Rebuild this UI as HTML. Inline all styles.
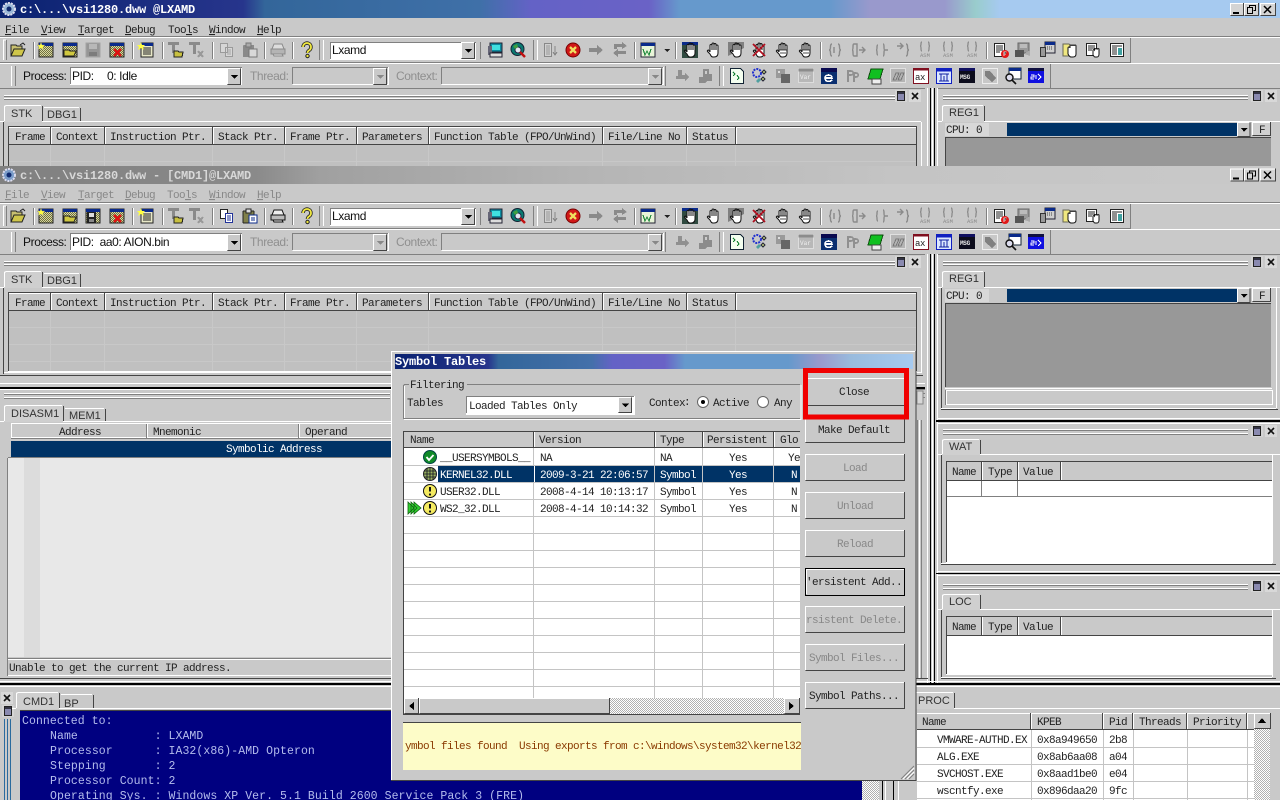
<!DOCTYPE html>
<html><head><meta charset="utf-8"><title>Symbol Tables</title>
<style>
html,body{margin:0;padding:0;background:#c9c9c9;overflow:hidden}
svg{display:block}
.m{font:11px "Liberation Mono",monospace;letter-spacing:-.6px;fill:#222}
.g{fill:#8f8f8f}
.mg{font:11px "Liberation Mono",monospace;letter-spacing:-.6px;fill:#888}
.w{fill:#fff}
.t{font:bold 12px "Liberation Mono",monospace;letter-spacing:-.2px;fill:#fff}
.s{font:11px "Liberation Sans",sans-serif;fill:#333}
.p{font:12px "Liberation Sans",sans-serif;letter-spacing:-.4px;fill:#111}
.pd{font:12px "Liberation Sans",sans-serif;letter-spacing:-.4px;fill:#8f8f8f}
.c{font:11.5px "Liberation Mono",monospace;letter-spacing:.07px;fill:#b4bcec}
.hi{stroke:#fff;fill:none}.lo{stroke:#444;fill:none}.bl{stroke:#000;fill:none}
.md{stroke:#808080;fill:none}.li{stroke:#c4c4c4;fill:none}
.ic{font:bold 6px "Liberation Mono",monospace}
path,rect{shape-rendering:crispEdges}
.i path,.i rect,.i circle{shape-rendering:auto}
</style></head><body>
<svg xmlns="http://www.w3.org/2000/svg" width="1280" height="800" viewBox="0 0 1280 800">
<defs>
<pattern id="ht" width="2" height="2" patternUnits="userSpaceOnUse"><rect width="2" height="2" fill="#fff"/><rect width="1" height="1" fill="#b0b0b0"/><rect x="1" y="1" width="1" height="1" fill="#b0b0b0"/></pattern>
<pattern id="hg" width="2" height="2" patternUnits="userSpaceOnUse"><rect width="2" height="2" fill="#d8d8a0"/><rect width="1" height="1" fill="#707040"/><rect x="1" y="1" width="1" height="1" fill="#707040"/></pattern>
<linearGradient id="tb1" gradientUnits="userSpaceOnUse" x1="0" x2="1280" y1="0" y2="0">
<stop offset="0" stop-color="#0a2270"/><stop offset=".19" stop-color="#27358c"/><stop offset=".207" stop-color="#33669a"/><stop offset=".375" stop-color="#3f70a8"/><stop offset=".415" stop-color="#6462c6"/><stop offset=".507" stop-color="#6a62c6"/><stop offset=".531" stop-color="#6699cc"/><stop offset=".648" stop-color="#6699cc"/><stop offset=".68" stop-color="#9999cc"/><stop offset=".738" stop-color="#9999cc"/><stop offset=".762" stop-color="#99cccc"/><stop offset=".781" stop-color="#a6caf0"/><stop offset="1" stop-color="#a6caf0"/></linearGradient>
<linearGradient id="tb2" gradientUnits="userSpaceOnUse" x1="0" x2="1280" y1="0" y2="0">
<stop offset="0" stop-color="#808080"/><stop offset=".2" stop-color="#8a8a8a"/><stop offset=".25" stop-color="#a0a0a0"/><stop offset=".45" stop-color="#b4b4b4"/><stop offset=".7" stop-color="#c4c4c4"/><stop offset="1" stop-color="#c9c9c9"/></linearGradient>
<linearGradient id="tb3" gradientUnits="userSpaceOnUse" x1="395" x2="913" y1="0" y2="0">
<stop offset="0" stop-color="#0a2270"/><stop offset=".18" stop-color="#27358c"/><stop offset=".2" stop-color="#33669a"/><stop offset=".38" stop-color="#4470aa"/><stop offset=".42" stop-color="#6462c6"/><stop offset=".52" stop-color="#6a62c6"/><stop offset=".56" stop-color="#6699cc"/><stop offset=".76" stop-color="#6699cc"/><stop offset=".82" stop-color="#9999cc"/><stop offset=".88" stop-color="#99bbdd"/><stop offset="1" stop-color="#a6caf0"/></linearGradient>

<g id="ar"><rect width="14" height="17" fill="#c9c9c9"/><path class="hi" d="M.5 16V.5H13"/><path class="lo" d="M.5 16.5H13.5V.5"/><path d="M4 7h7l-3.500 4z" fill="#000"/></g>
<g id="ard"><rect width="14" height="17" fill="#c9c9c9"/><path class="hi" d="M.5 16V.5H13"/><path class="lo" d="M.5 16.500H13.500V.5"/><path d="M4 7h7l-3.500 4z" fill="#888"/></g>

<g id="fo" class="i"><path d="M1 3h5l1 1h5v3H5L2 13H1z" fill="#c8c070" stroke="#222"/><path d="M4 7h11l-3 7H1z" fill="#cfc64a" stroke="#222"/><path d="M10 3l3-2 2 2" fill="none" stroke="#222"/></g>
<g id="win"><rect x="1" y="1" width="14" height="14" fill="url(#hg)" stroke="#222"/><rect x="1" y="1" width="14" height="3" fill="#0a2a8a"/></g>
<g id="w1" class="i"><use href="#win"/><path d="M3 0l1 3 3 0-2 2 1 3-3-2-3 2 1-3-2-2 3 0z" fill="#ffff40" stroke="#888" stroke-width=".4"/></g>
<g id="w2" class="i"><use href="#win"/><path d="M2 8h5l1 1h6l-2 5H2z" fill="#d0c840" stroke="#222"/></g>
<g id="w3"><rect x="1" y="1" width="14" height="14" fill="#969696" stroke="#a4a4a4"/><rect x="4" y="2" width="8" height="5" fill="#b8b8b8"/><rect x="4" y="10" width="8" height="4" fill="#7c7c7c"/></g>
<g id="sv"><use href="#win"/><rect x="2" y="4" width="9" height="11" fill="#222"/><rect x="4" y="5" width="5" height="4" fill="#ddd"/><rect x="4" y="11" width="5" height="3" fill="#888"/></g>
<g id="w4" class="i"><use href="#win"/><path d="M5 7l7 7M12 7l-7 7" stroke="#e01010" stroke-width="2.400"/></g>
<g id="nt" class="i"><rect x="3" y="1" width="12" height="14" fill="#e8e8c8" stroke="#222"/><rect x="3" y="1" width="12" height="3" fill="#0a2a8a"/><path d="M5 6h8M5 8h8M5 10h8M5 12h8" stroke="#222"/><path d="M3 0l1 3h3l-2 2 1 3-3-2-3 2 1-3-2-2h3z" fill="#ffff40"/></g>
<g id="t1"><rect x="0" y="0" width="11" height="3" fill="#8a8a8a"/><rect x="4" y="0" width="3" height="11" fill="#8a8a8a"/><path d="M6 9h4l1 1h4l-1 5H6z" fill="#c8c040" stroke="#222"/></g>
<g id="t2"><rect x="0" y="0" width="11" height="3" fill="#8a8a8a"/><rect x="4" y="0" width="3" height="12" fill="#8a8a8a"/><path d="M9 9l5 6M14 9l-5 6" stroke="#999" stroke-width="2"/></g>
<g id="cp"><path d="M1.500 1.500h7v9h-7zM6.500 5.500h7v9h-7z" fill="#d6d6d6" stroke="#9a9a9a"/><path d="M8 8h4M8 10h4M8 12h4" stroke="#a4a4a4"/></g>
<g id="cpn"><path d="M1.500 1.500h7v9h-7z" fill="#fff" stroke="#222"/><path d="M6.500 5.500h7v9h-7z" fill="#fff" stroke="#223399"/><path d="M8 8h4M8 10h4M8 12h4" stroke="#223399"/></g>
<g id="pa"><rect x="1" y="3" width="11" height="12" rx="1" fill="#8a8a8a"/><rect x="4" y="1" width="5" height="4" fill="#aaa" stroke="#777"/><rect x="7" y="7" width="8" height="8" fill="#d8d8d8" stroke="#777"/></g>
<g id="pan"><rect x="1" y="3" width="11" height="12" rx="1" fill="#80804a" stroke="#222"/><rect x="4" y="1" width="5" height="4" fill="#ddd" stroke="#222"/><rect x="7" y="7" width="8" height="8" fill="#fff" stroke="#0a2a8a"/><path d="M9 10h4M9 12h4" stroke="#0a2a8a"/></g>
<g id="pr" class="i"><path d="M4 2h8l2 5H2z" fill="#ddd" stroke="#8a8a8a"/><path d="M1 7h14v5H1z" fill="#b4b4b4" stroke="#8a8a8a"/><path d="M3 12h9l1 2H4z" fill="#ddd" stroke="#8a8a8a"/></g>
<g id="prn" class="i"><path d="M4 2h8l2 5H2z" fill="#eee" stroke="#111"/><path d="M1 7h14v5H1z" fill="#bbb" stroke="#111"/><path d="M3 12h9l1 2H4z" fill="#eee" stroke="#111"/></g>
<g id="qm" class="i"><path d="M4 5a4 4 0 1 1 6 3.500c-1 .6-1.500 1-1.500 2.500" fill="none" stroke="#222" stroke-width="3.400"/><path d="M4 5a4 4 0 1 1 6 3.500c-1 .6-1.500 1-1.500 2.500" fill="none" stroke="#f0e840" stroke-width="1.800"/><circle cx="8.500" cy="14" r="1.700" fill="#f0e840" stroke="#222"/></g>
<g id="pc"><rect x="3" y="1" width="12" height="9" fill="#0c8ca0" stroke="#223"/><rect x="5" y="3" width="8" height="5" fill="#40e0e0"/><rect x="1" y="4" width="4" height="9" fill="#667"/><rect x="3" y="11" width="12" height="4" fill="#ddd" stroke="#223"/></g>
<g id="gl" class="i"><circle cx="7.500" cy="7" r="6.500" fill="#0a7a70" stroke="#123"/><circle cx="8" cy="8" r="3" fill="#e0e8f0" stroke="#224"/><path d="M10 10l5 5" stroke="#c01010" stroke-width="2.500"/><path d="M3 4l4-2 1 3-3 2z" fill="#40a040"/></g>
<g id="li"><path d="M2.500 1.500h7v13h-7z" fill="#d0d0d0" stroke="#888"/><path d="M4 4h4M4 6h4M4 8h4M4 10h4M4 12h4" stroke="#999"/><path d="M13 4v8M11 10l2 3 2-3" stroke="#888" fill="none"/></g>
<g id="rx" class="i"><circle cx="8" cy="8" r="7" fill="#d01818" stroke="#700"/><path d="M5 5l6 6M11 5l-6 6" stroke="#f0e060" stroke-width="2.300"/></g>
<g id="ra"><path d="M1 6h8V3l6 5-6 5v-3H1z" fill="#8a8a8a"/></g>
<g id="ra2"><path d="M2 2h8V0l5 4-5 3V5H5v2H2zM14 9H6v-2L1 11l5 4v-3h8z" fill="#8a8a8a"/></g>
<g id="wy"><rect x="1" y="1" width="14" height="14" fill="#e8f4d8" stroke="#223"/><rect x="1" y="1" width="14" height="3" fill="#0a2a8a"/><path d="M3 7l2 6 2-4 2 4 2-6" fill="none" stroke="#108030"/></g>
<g id="dn"><path d="M2 7h6l-3 3z" fill="#222"/></g>
<g id="hp" class="i"><path d="M5 3h8v9l-3 3H7L2 9l3 1z" fill="#fff"/><path d="M5 10V3.500a1 1 0 0 1 2 0V8M7 8V2a1 1 0 0 1 2 0V8M9 8V2.500a1 1 0 0 1 2 0V8M11 8V4a1 1 0 0 1 2 0v7c0 2.500-1.500 4-4 4H8c-1.500 0-2-1-3-3L2.500 9.500c-.7-1 .8-2 1.500-1L5 10" fill="none" stroke="#111"/></g>
<g id="h1"><rect x="0" y="0" width="16" height="16" fill="#2f4a40"/><rect x="0" y="0" width="16" height="3" fill="#0a2a8a"/><use href="#hp"/></g>
<g id="h2" class="i"><use href="#hp"/></g>
<g id="h3" class="i"><path d="M0 0h16v6L0 14z" fill="#808080"/><use href="#hp"/></g>
<g id="h4" class="i"><use href="#hp"/><path d="M2 2l12 12M14 2L2 14" stroke="#b01020" stroke-width="1.800"/></g>
<g id="h5" class="i"><use href="#hp"/><path d="M5 8h8M6 11h6" stroke="#111" stroke-width=".8"/></g>
<g id="b1" class="i"><path d="M5 2C2 2 5 8 2 8c3 0 0 6 3 6M11 2c3 0 0 6 3 6-3 0 0 6-3 6" fill="none" stroke="#8a8a8a" stroke-width="1.400"/><path d="M7 5v6" stroke="#8a8a8a" stroke-width="1.400"/></g>
<g id="b2" class="i"><path d="M4 2C2 2 4 8 2 8c2 0 0 6 2 6h3V2zM9 8h6M12 5l3 3-3 3" fill="none" stroke="#8a8a8a" stroke-width="1.400"/></g>
<g id="b3" class="i"><path d="M5 3C3 3 5 8 3 8c2 0 0 5 2 5M10 2c2 0 0 6 2 6-2 0 0 6-2 6M12 8h3" fill="none" stroke="#8a8a8a" stroke-width="1.400"/></g>
<g id="b4" class="i"><path d="M1 4h6M4 1l3 3-3 3M10 2c3 0 0 6 3 6-3 0 0 6-3 6" fill="none" stroke="#8a8a8a" stroke-width="1.400"/></g>
<g id="b5" class="i"><path d="M5 0C3 0 5 4 3 4c2 0 0 5 2 5M11 0c2 0 0 4 2 4-2 0 0 5-2 5" fill="none" stroke="#8a8a8a" stroke-width="1.300"/><text class="ic" x="3" y="15" style="font-size:5.500px;font-weight:normal;fill:#8a8a8a">ASM</text></g>
<g id="ff" class="i"><path d="M1.500 1.500h10v13h-10z" fill="#fff" stroke="#222"/><path d="M3 4h7M3 6h7M3 8h7M3 10h4" stroke="#222"/><circle cx="12" cy="12" r="4" fill="#e01818"/><path d="M11 14v-4h2.500M11 12h2" stroke="#fff" stroke-width=".8"/></g>
<g id="fe"><path d="M3 1h11v10H3z" fill="#999" stroke="#666"/><path d="M5 3h7M5 5h7" stroke="#ddd"/><path d="M0 8h9v7H0z" fill="#555"/><path d="M9 12l6-4v6z" fill="#aaa"/></g>
<g id="fm"><rect x="6" y="0" width="10" height="11" fill="#cfcfcf" stroke="#223"/><rect x="6" y="0" width="10" height="3" fill="#0a2a8a"/><path d="M1.500 5.500h5v9h-5z" fill="#999" stroke="#333"/><path d="M8 5h6M8 7h6" stroke="#444" stroke-dasharray="1 1"/></g>
<g id="fh" class="i"><path d="M1 2h6l2 2h4v10H1z" fill="#f0e880" stroke="#665"/><path d="M6 9V6a1 1 0 0 1 2 0V4a1 1 0 0 1 2 0 1 1 0 0 1 2 0 1 1 0 0 1 2 0v8c0 2-1 3-3 3H9c-1 0-2-1-3-3z" fill="#fff" stroke="#111"/></g>
<g id="fd" class="i"><path d="M1.500 1.500h10v12h-10z" fill="#fff" stroke="#222"/><path d="M3 4h7M3 6h7M3 8h4" stroke="#222"/><path d="M8 10V8a1 1 0 0 1 1.500 0V7a1 1 0 0 1 1.500 0 1 1 0 0 1 1.500 0 1 1 0 0 1 1.500 0v5c0 2-1 3-2 3h-2c-1 0-1-1-2-2z" fill="#fff" stroke="#111"/></g>
<g id="fl"><path d="M1.500 1.500h13v13h-13z" fill="#fff" stroke="#222"/><path d="M3 4h10M3 6h5M3 8h5M3 10h5M3 12h5" stroke="#222"/><path d="M9 6h4v7H9z" fill="#40a0a0"/></g>
<g id="a1"><path d="M4 2h4v5h3v-2l4 4-4 4v-2H2V8h2z" fill="#909090"/></g>
<g id="a2"><path d="M5 1h6v5h3v7H9l-2 2H1V9h4z" fill="#8c8c8c"/><path d="M7 3h2v3H7z" fill="#ccc"/></g>
<g id="sr"><path d="M1.500 .5h10l3 3v12h-13z" fill="#f4fff0" stroke="#123"/><path d="M4 4l2 2-2 2M8 7l2 3-2 2" fill="none" stroke="#108030"/></g>
<g id="gr" class="i"><circle cx="5" cy="5" r="4" fill="none" stroke="#2030d0" stroke-width="2" stroke-dasharray="2 1"/><path d="M12 2l2 2-2 2-2-2zM11 9l2 2-2 2-2-2z" fill="#c0d080" stroke="#223"/><path d="M4 13l3-3 2 2-3 3z" fill="#50a0a0"/></g>
<g id="st"><path d="M1 1h9v9H1z" fill="#9a9a9a"/><path d="M6 6h9v9H6z" fill="#666"/><path d="M3 3h2v2H3z" fill="#ddd"/></g>
<g id="vr"><rect x=".5" y=".5" width="15" height="14" fill="#b8b8b8" stroke="#ddd"/><rect x=".5" y=".5" width="15" height="3" fill="#8c8c8c"/><text class="ic" x="2" y="11" style="font-weight:normal;fill:#f0f0f0">Var</text></g>
<g id="eb"><rect x="0" y="0" width="16" height="16" fill="#0a2f70"/><rect x="0" y="0" width="16" height="4" fill="#0a0a50"/><path d="M4 10h7c0-4-7-4-7 0s5 4 7 2" fill="none" stroke="#fff" stroke-width="1.600"/></g>
<g id="pp"><path d="M3 14V3h3c3 0 3 4 0 4H3M9 14V5h2c3 0 3 4 0 4H9" fill="none" stroke="#909090" stroke-width="1.600"/></g>
<g id="gb"><path d="M4 1h12l-3 10H1z" fill="#10c020" stroke="#105010"/><path d="M5 11h9v5H5z" fill="#eee" stroke="#444"/></g>
<g id="sq"><rect x=".5" y=".5" width="15" height="14" fill="#b4b4b4" stroke="#e0e0e0"/><path d="M3 12l3-7 3 0-3 7zM8 12l3-7 3 0-3 7z" fill="none" stroke="#777"/></g>
<g id="ax"><rect x=".5" y=".5" width="15" height="15" fill="#fff" stroke="#801020"/><rect x=".5" y=".5" width="15" height="2" fill="#801020"/><text class="ic" x="2" y="12" style="font-size:9px;font-weight:normal;fill:#222;letter-spacing:-.4px">ax</text></g>
<g id="mm"><rect x=".5" y=".5" width="15" height="15" fill="#dce8ff" stroke="#1020c0"/><rect x=".5" y=".5" width="15" height="3" fill="#1020c0"/><path d="M3 6h10M3 13h10M5 6v7M11 6v7M8 8v5" stroke="#1020a0" stroke-width="1.400"/></g>
<g id="ms"><rect width="16" height="15" fill="#0c0c1c"/><rect width="16" height="3" fill="#101060"/><text class="ic" x="1" y="11" style="fill:#e4e4e4;letter-spacing:-.3px">MSG</text></g>
<g id="tg"><rect x=".5" y=".5" width="15" height="15" fill="#c8c8c8" stroke="#eee"/><path d="M3 3h5l6 7-4 4-7-6z" fill="#808080"/></g>
<g id="dg" class="i"><rect x="4" y="0" width="12" height="11" fill="#fff" stroke="#123"/><rect x="4" y="0" width="12" height="3" fill="#0a2a8a"/><circle cx="4.500" cy="9.500" r="3.500" fill="#dde" stroke="#111" stroke-width="1.400"/><path d="M7 12l4 4" stroke="#111" stroke-width="1.600"/></g>
<g id="si"><rect width="16" height="15" fill="#1010e0"/><rect width="16" height="3" fill="#101040"/><path d="M3 7h3v2H3v2h3M8 7v4M10 6l3 3-3 3" fill="none" stroke="#fff"/></g>

<g id="icons1">
<use href="#fo" x="10" y="42"/><use href="#w1" x="38" y="42"/><use href="#w2" x="62" y="42"/><use href="#w3" x="85" y="42"/><use href="#w4" x="109" y="42"/><use href="#nt" x="138" y="42"/><use href="#t1" x="168" y="42"/><use href="#t2" x="189" y="42"/><use href="#cp" x="219" y="42"/><use href="#pa" x="242" y="42"/><use href="#pr" x="270" y="42"/><use href="#qm" x="299" y="42"/>
<use href="#pc" x="487" y="42"/><use href="#gl" x="510" y="42"/><use href="#li" x="542" y="42"/><use href="#rx" x="565" y="42"/><use href="#ra" x="588" y="42"/><use href="#ra2" x="612" y="42"/><use href="#wy" x="640" y="42"/><use href="#dn" x="662" y="42"/>
<use href="#h1" x="682" y="42"/><use href="#h2" x="705" y="42"/><use href="#h3" x="728" y="42"/><use href="#h4" x="751" y="42"/><use href="#h5" x="774" y="42"/><use href="#h5" x="797" y="42"/>
<use href="#b1" x="827" y="42"/><use href="#b2" x="850" y="42"/><use href="#b3" x="873" y="42"/><use href="#b4" x="896" y="42"/><use href="#b5" x="917" y="42"/><use href="#b5" x="940" y="42"/><use href="#b5" x="964" y="42"/>
<use href="#ff" x="993" y="42"/><use href="#fe" x="1015" y="42"/><use href="#fm" x="1039" y="42"/><use href="#fh" x="1062" y="42"/><use href="#fd" x="1085" y="42"/><use href="#fl" x="1109" y="42"/>
<use href="#a1" x="674" y="68"/><use href="#a2" x="698" y="68"/>
<use href="#sr" x="729" y="68"/><use href="#gr" x="752" y="68"/><use href="#st" x="775" y="68"/><use href="#vr" x="798" y="68"/><use href="#eb" x="821" y="68"/><use href="#pp" x="845" y="68"/><use href="#gb" x="867" y="68"/><use href="#sq" x="890" y="68"/><use href="#ax" x="913" y="68"/><use href="#mm" x="936" y="68"/><use href="#ms" x="959" y="68"/><use href="#tg" x="982" y="68"/><use href="#dg" x="1005" y="68"/><use href="#si" x="1028" y="68"/>
</g>
<g id="tbfr">
<path class="hi" d="M0 37.500H1280"/><path class="md" d="M0 36.500H1280"/>
<path class="md" d="M0 62.500H1130.500V38"/><path class="hi" d="M0 63.500H1280"/>
<path class="md" d="M0 88.500H1280"/><path class="md" d="M1050.500 64V88"/>
<path class="md" d="M33.500 42V59M132.500 42V59M162.500 42V59M212.500 42V59M264.500 42V59M292.500 42V59M319.500 40V60M480.500 42V59M533.500 40V60M634.500 42V59M675.500 42V59M820.500 42V59M986.500 42V59"/>
<path class="hi" d="M34.500 42V59M133.500 42V59M163.500 42V59M213.500 42V59M265.500 42V59M293.500 42V59M323.500 40V60M537.500 40V60M635.500 42V59M676.500 42V59M821.500 42V59M987.500 42V59"/>
<path class="hi" d="M3.500 60V40H6"/><path class="md" d="M6.500 40V60"/><path class="hi" d="M11.500 86V66"/><path class="md" d="M15.500 66V86"/>
<path class="md" d="M719.500 66V86M665.500 66V86"/><path class="hi" d="M723.500 66V86"/>
<rect x="330" y="42" width="146" height="18" fill="#fff"/><path class="md" d="M330.500 59V42.500H476"/><use href="#ar" x="461" y="42"/>
<rect x="70" y="67" width="172" height="18" fill="#fff"/><path class="md" d="M70.500 84V67.500H242"/><use href="#ar" x="227" y="68"/>
<path class="md" d="M292.500 84V67.500H388"/><path class="hi" d="M292.500 84.500H388.500V67"/><use href="#ard" x="373" y="68"/>
<path class="md" d="M441.500 84V67.500H663"/><path class="hi" d="M441.500 84.500H663.500V67"/><use href="#ard" x="648" y="68"/>
</g>
<g id="bt"><rect width="12" height="12" fill="#d4d4d4"/><rect x="2.500" y="1.500" width="7" height="9" fill="#8a8ab0" stroke="#222"/><rect x="3" y="2" width="6" height="2" fill="#334"/></g>
<g id="xb"><rect width="12" height="12" fill="#d8d8d8"/><path d="M3 3l6 6M9 3l-6 6" stroke="#111" stroke-width="1.600" style="shape-rendering:auto"/></g>
<g id="wbt"><rect x="1230" y="3" width="13" height="13" fill="#d4d4d4"/><path class="hi" d="M1230.500 15V3.500H1243"/><path class="lo" d="M1230.500 15.500H1243.500V3"/><rect x="1233" y="12" width="6" height="2" fill="#000"/>
<rect x="1244" y="3" width="14" height="13" fill="#d4d4d4"/><path class="hi" d="M1244.500 15V3.500H1258"/><path class="lo" d="M1244.500 15.500H1258.500V3"/><path class="bl" d="M1249.500 7V5.500H1255.500V10.500H1253.500M1247.500 7.500H1252.500V13.500H1247.500Z"/>
<rect x="1260" y="3" width="15" height="13" fill="#d4d4d4"/><path class="hi" d="M1260.500 15V3.500H1275"/><path class="lo" d="M1260.500 15.500H1275.500V3"/><path d="M1264 6l7 7M1271 6l-7 7" stroke="#000" stroke-width="1.500" style="shape-rendering:auto"/></g>
<g id="stkf">
<path class="hi" d="M4 95.500H896M4 98.500H896"/><path class="md" d="M4 96.500H896M4 99.500H896"/>
<use href="#bt" x="895" y="90"/><use href="#xb" x="909" y="90"/>
<path class="hi" d="M943 95.500H1248M943 98.500H1248"/><path class="md" d="M943 96.500H1248M943 99.500H1248"/>
<use href="#bt" x="1251" y="90"/><use href="#xb" x="1265" y="90"/>
<rect x="925" y="88" width="13" height="90" fill="#c9c9c9"/><path class="bl" d="M930.500 88V178M934.500 88V178"/><path class="hi" d="M927.500 88V178M932.500 88V178M937.500 88V178"/>
<rect x="4" y="105" width="38" height="17" fill="#cfcfcf"/><path class="hi" d="M4.500 121V106.500L6 105.500H41"/><path class="lo" d="M42.500 106V121"/>
<path class="hi" d="M44 107.500H79"/><path class="lo" d="M80.500 108V121"/>
<path class="hi" d="M0 121.500H4M42 121.500H921"/>
<path class="lo" d="M8.500 127V200M8 126.500H916.500V200"/>
<rect x="9" y="127" width="907" height="18" fill="#c9c9c9"/><path class="hi" d="M9 127.500H916"/><path class="lo" d="M9 144.500H916"/>
<path class="lo" d="M50.500 127V144M104.500 127V144M212.500 127V144M284.500 127V144M356.500 127V144M428.500 127V144M602.500 127V144M686.500 127V144M735.500 127V144"/>
<path class="hi" d="M51.500 127V144M105.500 127V144M213.500 127V144M285.500 127V144M357.500 127V144M429.500 127V144M603.500 127V144M687.500 127V144M736.500 127V144"/>
<rect x="9" y="145" width="907" height="60" fill="#c0c0c0"/>
<path d="M50.500 145V205M104.500 145V205M212.500 145V205M284.500 145V205M356.500 145V205M428.500 145V205M602.500 145V205M686.500 145V205M735.500 145V205M9 161.500H916M9 178.500H916M9 195.500H916" stroke="#c8c8c8" fill="none"/>
<path class="hi" d="M921.500 122V200"/>
<path class="lo" d="M3.500 122V200"/>
<rect x="942" y="105" width="42" height="17" fill="#cfcfcf"/><path class="hi" d="M942.500 121V106.500L944 105.500H983"/><path class="lo" d="M984.500 106V121"/>
<path class="hi" d="M938 121.500H942M984 121.500H1280"/>
<rect x="945" y="123" width="44" height="13" fill="#d8d8d8"/>
<rect x="1007" y="123" width="230" height="13" fill="#003366"/><use href="#ar" transform="translate(1237 122) scale(.95 .88)"/>
<rect x="1252" y="122" width="18" height="14" fill="#d0d0d0"/><path class="hi" d="M1252.500 135V122.500H1270"/><path class="lo" d="M1252.500 135.500H1270.500V122"/>
<rect x="946" y="137" width="325" height="45" fill="#989898"/><path class="lo" d="M945.500 137V182M945.500 137.500H1271"/>
</g>
</defs>

<rect width="1280" height="800" fill="#c9c9c9"/>

<!-- window 1 -->
<rect width="1280" height="18" fill="url(#tb1)"/>
<g class="i"><circle cx="9" cy="9" r="6" fill="#9ab8d8" stroke="#dde" stroke-width="2" stroke-dasharray="2 1"/><circle cx="9" cy="9" r="2.500" fill="#102a70"/></g>
<text class="t" x="20" y="13">c:\...\vsi1280.dww @LXAMD</text>
<use href="#wbt"/>
<text class="m" x="5" y="33"><tspan text-decoration="underline">F</tspan>ile</text>
<text class="m" x="41" y="33"><tspan text-decoration="underline">V</tspan>iew</text>
<text class="m" x="78" y="33"><tspan text-decoration="underline">T</tspan>arget</text>
<text class="m" x="125" y="33"><tspan text-decoration="underline">D</tspan>ebug</text>
<text class="m" x="168" y="33">Too<tspan text-decoration="underline">l</tspan>s</text>
<text class="m" x="209" y="33"><tspan text-decoration="underline">W</tspan>indow</text>
<text class="m" x="257" y="33"><tspan text-decoration="underline">H</tspan>elp</text>
<use href="#tbfr"/><use href="#icons1"/>
<text class="p" x="332" y="54">Lxamd</text>
<text class="p" x="23" y="80">Process:</text><text class="p" x="72" y="80">PID:</text><text class="p" x="107" y="80">0: Idle</text>
<text class="pd" x="250" y="80">Thread:</text><text class="pd" x="396" y="80">Context:</text>
<use href="#stkf"/>
<text class="s" x="11" y="117">STK</text><text class="s" x="47" y="118">DBG1</text>
<text class="m" x="15" y="140">Frame</text><text class="m" x="56" y="140">Context</text><text class="m" x="110" y="140">Instruction Ptr.</text><text class="m" x="218" y="140">Stack Ptr.</text><text class="m" x="290" y="140">Frame Ptr.</text><text class="m" x="362" y="140">Parameters</text><text class="m" x="434" y="140">Function Table (FPO/UnWind)</text><text class="m" x="608" y="140">File/Line No</text><text class="m" x="692" y="140">Status</text>
<text class="s" x="949" y="116">REG1</text><text class="m" x="946" y="133">CPU: 0</text><text class="m" x="1259" y="133">F</text>

<!-- window 2 -->
<rect y="166" width="1280" height="634" fill="#c9c9c9"/>
<rect y="166" width="1280" height="18" fill="url(#tb2)"/>
<g class="i"><circle cx="9" cy="175" r="6" fill="#7a9cc8" stroke="#dde" stroke-width="2" stroke-dasharray="2 1"/><circle cx="9" cy="175" r="2.500" fill="#102a70"/></g>
<text class="t" x="20" y="179" style="fill:#d8d8d8">c:\...\vsi1280.dww - [CMD1]@LXAMD</text>
<use href="#wbt" y="165.500"/>
<text class="mg" x="5" y="198"><tspan text-decoration="underline">F</tspan>ile</text>
<text class="mg" x="41" y="198"><tspan text-decoration="underline">V</tspan>iew</text>
<text class="mg" x="78" y="198"><tspan text-decoration="underline">T</tspan>arget</text>
<text class="mg" x="125" y="198"><tspan text-decoration="underline">D</tspan>ebug</text>
<text class="mg" x="167" y="198">Too<tspan text-decoration="underline">l</tspan>s</text>
<text class="mg" x="209" y="198"><tspan text-decoration="underline">W</tspan>indow</text>
<text class="mg" x="257" y="198"><tspan text-decoration="underline">H</tspan>elp</text>
<use href="#tbfr" y="166"/><use href="#icons1" y="166"/>
<rect x="85" y="208" width="16" height="16" fill="#c9c9c9"/><use href="#sv" x="85" y="208"/>
<rect x="219" y="207" width="16" height="17" fill="#c9c9c9"/><use href="#cpn" x="219" y="208"/>
<rect x="242" y="207" width="16" height="17" fill="#c9c9c9"/><use href="#pan" x="242" y="208"/>
<rect x="270" y="207" width="16" height="17" fill="#c9c9c9"/><use href="#prn" x="270" y="208"/>
<text class="p" x="332" y="220">Lxamd</text>
<text class="p" x="23" y="246">Process:</text><text class="p" x="72" y="246">PID:&#160;&#160;aa0: AION.bin</text>
<text class="pd" x="250" y="246">Thread:</text><text class="pd" x="396" y="246">Context:</text>
<use href="#stkf" y="166"/>
<text class="s" x="11" y="283">STK</text><text class="s" x="47" y="284">DBG1</text>
<text class="m" x="15" y="306">Frame</text><text class="m" x="56" y="306">Context</text><text class="m" x="110" y="306">Instruction Ptr.</text><text class="m" x="218" y="306">Stack Ptr.</text><text class="m" x="290" y="306">Frame Ptr.</text><text class="m" x="362" y="306">Parameters</text><text class="m" x="434" y="306">Function Table (FPO/UnWind)</text><text class="m" x="608" y="306">File/Line No</text><text class="m" x="692" y="306">Status</text>
<text class="s" x="949" y="282">REG1</text><text class="m" x="946" y="299">CPU: 0</text><text class="m" x="1259" y="299">F</text>
<!-- STK lower -->
<rect x="9" y="345" width="907" height="26" fill="#c0c0c0"/>
<path d="M50.500 311V371M104.500 311V371M212.500 311V371M284.500 311V371M356.500 311V371M428.500 311V371M602.500 311V371M686.500 311V371M735.500 311V371M9 327.500H916M9 344.500H916M9 361.500H916" stroke="#c8c8c8" fill="none"/>
<path class="hi" d="M8 371.500H917"/><path class="lo" d="M8.500 311V371M916.500 311V371"/>
<path class="hi" d="M3 372.500H921M921.500 288V373"/><path class="lo" d="M3.500 288V374M0 375.500H923"/>
<rect x="0" y="376" width="925" height="14" fill="#c9c9c9"/>
<path class="hi" d="M0 383.500H925M0 389.500H925"/><path class="bl" d="M0 387.500H925M0 388.500H925"/>
<!-- right column reg lower -->
<rect x="925" y="340" width="13" height="345" fill="#c9c9c9"/><path class="bl" d="M930.500 300V685M934.500 300V685"/><path class="hi" d="M927.500 300V685M932.500 300V685M937.500 300V685"/>
<rect x="946" y="303" width="325" height="84" fill="#989898"/><path class="lo" d="M945.500 303V387M945.500 303.500H1271"/>
<path class="hi" d="M945 388.500H1272M946.500 404V390.500H1272M1272.500 390V405M946 404.500H1272"/>
<path class="md" d="M945.500 390V405"/>
<path class="hi" d="M941 408.500H1276M1276.500 288V408"/><path class="lo" d="M941.500 288V408M941 409.500H1278"/>
<!-- sash -->
<path class="bl" d="M936 420.500H1280M936 421.500H1280"/><path class="hi" d="M938 418.500H1280M938 423.500H1280"/>
<!-- DISASM panel -->
<path class="hi" d="M4 393.500H390M4 397.500H390"/><path class="md" d="M4 394.500H390M4 398.500H390"/>
<rect x="4" y="405" width="59" height="17" fill="#cfcfcf"/><path class="hi" d="M4.500 421V406.500L6 405.500H62"/><path class="lo" d="M63.500 406V421"/>
<path class="hi" d="M65 408.500H104"/><path class="lo" d="M105.500 409V421"/>
<path class="hi" d="M0 421.500H4M63 421.500H392"/>
<text class="s" x="11" y="417">DISASM1</text><text class="s" x="69" y="419">MEM1</text>
<path class="hi" d="M11 423.500H391M11 437.500H391M11.500 424V438M147.500 424V438M299.500 424V438"/><path class="md" d="M11 438.500H391M146.500 424V438M298.500 424V438"/>
<text class="m" x="59" y="435">Address</text><text class="m" x="153" y="435">Mnemonic</text><text class="m" x="305" y="435">Operand</text>
<rect x="11" y="441" width="380" height="16" fill="#003366"/>
<text class="m w" x="226" y="452">Symbolic Address</text>
<rect x="8" y="458" width="383" height="199" fill="#e8e8e8"/><rect x="24" y="458" width="16" height="199" fill="#dcdcdc"/>
<path class="md" d="M7.500 458V676M8 457.500H391M8 658.500H391"/><path class="hi" d="M8 659.500H391M8 675.500H391"/>
<text class="m" x="9" y="671">Unable to get the current IP address.</text>
<path class="lo" d="M0 678.500H391"/><path class="hi" d="M0 681.500H391M0 686.500H391"/><path class="bl" d="M0 683.500H391M0 684.500H391"/>
<!-- right of dialog strip -->
<path class="md" d="M917.500 420V678M921.500 420V678"/><path class="hi" d="M919.500 420V678"/><path class="lo" d="M916 678.500H928"/>
<path class="bl" d="M916 683.500H1280M916 684.500H1280"/><path class="hi" d="M916 681.500H1280M916 686.500H1280"/>
<path class="md" d="M916 389.500H925M916 393.500H925M916 397.500H925"/>
<rect x="917" y="391" width="6" height="13" fill="#d8d8d8" stroke="#888"/>
<!-- WAT -->
<path class="hi" d="M943 429.500H1248M943 433.500H1248"/><path class="md" d="M943 430.500H1248M943 434.500H1248"/>
<use href="#bt" x="1251" y="425"/><use href="#xb" x="1265" y="425"/>
<rect x="942" y="439" width="38" height="16" fill="#cfcfcf"/><path class="hi" d="M942.500 454V440.500L944 439.500H979"/><path class="lo" d="M980.500 440V454"/><path class="hi" d="M938 454.500H942M980 454.500H1280"/>
<text class="s" x="949" y="450">WAT</text>
<rect x="946" y="462" width="326" height="100" fill="#fff"/>
<rect x="947" y="462" width="325" height="18" fill="#c9c9c9"/>
<path class="lo" d="M946.500 461V562M946 461.500H1272M947 480.500H1272M981.500 462V480M1017.500 462V480M1060.500 462V480M941.500 455V563M941 564.500H1276"/>
<path class="hi" d="M982.500 462V480M1018.500 462V480M1061.500 462V480M1272.500 455V563M946 562.500H1272M941 563.500H1272"/>
<path class="md" d="M981.500 481V496M1017.500 481V496M947 496.500H1272"/>
<text class="m" x="952" y="475">Name</text><text class="m" x="988" y="475">Type</text><text class="m" x="1023" y="475">Value</text>
<path class="bl" d="M936 573.500H1280"/><path class="hi" d="M938 571.500H1280M938 575.500H1280"/>
<!-- LOC -->
<path class="hi" d="M943 584.500H1248M943 588.500H1248"/><path class="md" d="M943 585.500H1248M943 589.500H1248"/>
<use href="#bt" x="1251" y="580"/><use href="#xb" x="1265" y="580"/>
<rect x="942" y="594" width="38" height="16" fill="#cfcfcf"/><path class="hi" d="M942.500 609V595.500L944 594.500H979"/><path class="lo" d="M980.500 595V609"/><path class="hi" d="M938 609.500H942M980 609.500H1280"/>
<text class="s" x="949" y="605">LOC</text>
<rect x="946" y="617" width="326" height="57" fill="#fff"/>
<rect x="947" y="617" width="325" height="18" fill="#c9c9c9"/>
<path class="lo" d="M946.500 616V674M946 616.500H1272M947 635.500H1272M981.500 617V635M1017.500 617V635M1060.500 617V635M941.500 610V678M941 678.500H1276"/>
<path class="hi" d="M982.500 617V635M1018.500 617V635M1061.500 617V635M1272.500 610V677M946 674.500H1272M941 677.500H1272"/>
<text class="m" x="952" y="630">Name</text><text class="m" x="988" y="630">Type</text><text class="m" x="1023" y="630">Value</text>
<!-- CMD panel -->
<use href="#xb" x="1" y="692"/><use href="#bt" x="2" y="705"/>
<path d="M4.500 719V800M7.500 719V800M10.500 719V800" stroke="#2a6a9e" fill="none"/>
<rect x="16" y="692" width="43" height="17" fill="#cfcfcf"/><path class="hi" d="M16.500 708V693.500L18 692.500H58"/><path class="lo" d="M59.500 693V708"/><path class="hi" d="M61 694.500H92"/><path class="lo" d="M93.500 695V708"/>
<path class="hi" d="M12 708.500H16M59 708.500H391"/>
<text class="s" x="23" y="705">CMD1</text><text class="s" x="64" y="707">BP</text>
<rect x="20" y="711" width="842" height="89" fill="#000080"/>
<path class="lo" d="M20 710.500H391"/>
<text class="c" x="22" y="724" xml:space="preserve">Connected to:</text>
<text class="c" x="50" y="739" xml:space="preserve">Name           : LXAMD</text>
<text class="c" x="50" y="754" xml:space="preserve">Processor      : IA32(x86)-AMD Opteron</text>
<text class="c" x="50" y="769" xml:space="preserve">Stepping       : 2</text>
<text class="c" x="50" y="784" xml:space="preserve">Processor Count: 2</text>
<text class="c" x="50" y="799" xml:space="preserve">Operating Sys. : Windows XP Ver. 5.1 Build 2600 Service Pack 3 (FRE)</text>
<rect x="862" y="781" width="17" height="19" fill="url(#ht)"/>
<path class="bl" d="M882.500 781V800M893.500 781V800"/><path class="hi" d="M885.500 781V800M898.500 781V800"/>
<!-- PROC -->
<rect x="916" y="692" width="38" height="17" fill="#cfcfcf"/><path class="hi" d="M916 692.500H953"/><path class="lo" d="M954.500 693V708"/><path class="hi" d="M954 708.500H1280"/>
<text class="s" x="918" y="704">PROC</text>
<rect x="917" y="730" width="337" height="70" fill="#fff"/>
<rect x="917" y="713" width="353" height="17" fill="#c9c9c9"/>
<path class="hi" d="M917 713.500H1270"/><path class="lo" d="M917 729.500H1254M1030.500 713V729M1102.500 713V729M1132.500 713V729M1186.500 713V729M1246.500 713V729"/>
<path class="hi" d="M1031.500 713V729M1103.500 713V729M1133.500 713V729M1187.500 713V729M1247.500 713V729"/>
<path class="li" d="M1031.500 730V800M1103.500 730V800M1133.500 730V800M1187.500 730V800M1247.500 730V800M917 747.500H1254M917 764.500H1254M917 781.500H1254M917 798.500H1254"/>
<text class="m" x="922" y="725">Name</text><text class="m" x="1037" y="725">KPEB</text><text class="m" x="1109" y="725">Pid</text><text class="m" x="1139" y="725">Threads</text><text class="m" x="1193" y="725">Priority</text>
<text class="m" x="937" y="743">VMWARE-AUTHD.EX</text><text class="m" x="1037" y="743">0x8a949650</text><text class="m" x="1109" y="743">2b8</text>
<text class="m" x="937" y="760">ALG.EXE</text><text class="m" x="1037" y="760">0x8ab6aa08</text><text class="m" x="1109" y="760">a04</text>
<text class="m" x="937" y="777">SVCHOST.EXE</text><text class="m" x="1037" y="777">0x8aad1be0</text><text class="m" x="1109" y="777">e04</text>
<text class="m" x="937" y="794">wscntfy.exe</text><text class="m" x="1037" y="794">0x896daa20</text><text class="m" x="1109" y="794">9fc</text>
<rect x="1254" y="729" width="16" height="71" fill="url(#ht)"/>
<rect x="1254" y="713" width="16" height="16" fill="#c9c9c9"/><path class="hi" d="M1254.500 728V713.500H1270"/><path class="lo" d="M1254.500 728.500H1270.500V713"/><path d="M1258 723h8l-4-5z" fill="#000"/>

<!-- DIALOG -->
<rect x="391" y="351" width="525" height="430" fill="#c9c9c9"/>
<path class="hi" d="M391.500 780V351.500H915"/><path class="lo" d="M391 780.500H916V351"/>
<rect x="395" y="354" width="518" height="15" fill="url(#tb3)"/>
<text class="t" x="395" y="365">Symbol Tables</text>
<path class="md" d="M409 384.500H404.500L403.500 385.500V418.500H800"/><path class="md" d="M467 384.500H800"/>
<path class="hi" d="M404.500 386V418M404 419.500H801V385"/>
<text class="m" x="410" y="388">Filtering</text>
<text class="m" x="407" y="406">Tables</text>
<rect x="466" y="396" width="168" height="18" fill="#fff"/><path class="md" d="M466.500 413V396.500H634"/><path class="hi" d="M466 414.500H634.500V396"/>
<text class="m" x="469" y="409">Loaded Tables Only</text>
<use href="#ar" transform="translate(618 397) scale(1 .95)"/>
<text class="m" x="649" y="406">Contex</text><text class="m" x="684" y="405">:</text>
<g class="i"><circle cx="703" cy="402" r="5.500" fill="#fff" stroke="#666"/><circle cx="703" cy="402" r="2" fill="#000"/><circle cx="763" cy="402" r="5.500" fill="#fff" stroke="#666"/></g>
<text class="m" x="713" y="406">Active</text><text class="m" x="774" y="406">Any</text>

<!-- table -->
<rect x="404" y="432" width="396" height="266" fill="#fff"/>
<rect x="404" y="432" width="396" height="16" fill="#c9c9c9"/>
<path class="lo" d="M403.500 431V715M403 431.500H800M404 447.500H800M533.500 432V447M654.500 432V447M702.500 432V447M773.500 432V447"/>
<path class="hi" d="M534.500 432V447M655.500 432V447M703.500 432V447M774.500 432V447"/>
<text class="m" x="410" y="443">Name</text><text class="m" x="539" y="443">Version</text><text class="m" x="660" y="443">Type</text><text class="m" x="707" y="443">Persistent</text><text class="m" x="780" y="443">Glo</text>
<path class="li" d="M533.500 448V698M654.500 448V698M702.500 448V698M773.500 448V698M404 465.500H800M404 482.500H800M404 499.500H800M404 516.500H800M404 533.500H800M404 550.500H800M404 567.500H800M404 584.500H800M404 601.500H800M404 618.500H800M404 635.500H800M404 652.500H800M404 669.500H800M404 686.500H800"/>
<rect x="438" y="466" width="96" height="16" fill="#003366"/><rect x="535" y="466" width="119" height="16" fill="#003366"/><rect x="655" y="466" width="47" height="16" fill="#003366"/><rect x="703" y="466" width="70" height="16" fill="#003366"/><rect x="774" y="466" width="26" height="16" fill="#003366"/>
<g class="i">
<circle cx="430" cy="457" r="6.500" fill="#108a28" stroke="#044"/><path d="M426.500 457l2.500 3 4.500-5" fill="none" stroke="#fff" stroke-width="1.800"/>
<circle cx="430" cy="474" r="6.500" fill="#98b060" stroke="#222"/><path d="M424 471h12M424 474h12M424 477h12M427 468v12M430 468v12M433 468v12" stroke="#112" stroke-width=".8"/>
<circle cx="430" cy="491" r="6.500" fill="#f4ea60" stroke="#111"/><path d="M430 487v4.500" stroke="#111" stroke-width="2"/><circle cx="430" cy="494.500" r="1.100" fill="#111"/>
<circle cx="430" cy="508" r="6.500" fill="#f4ea60" stroke="#111"/><path d="M430 504v4.500" stroke="#111" stroke-width="2"/><circle cx="430" cy="511.500" r="1.100" fill="#111"/>
<path d="M408 502l6 6-6 6zM411 502l6 6-6 6zM414 502l7 6-7 6z" fill="#30d030" stroke="#106010" stroke-width=".8"/>
</g>
<text class="m" x="440" y="461">__USERSYMBOLS__</text><text class="m" x="540" y="461">NA</text><text class="m" x="660" y="461">NA</text><text class="m" x="729" y="461">Yes</text><text class="m" x="788" y="461">Ye</text>
<text class="m w" x="440" y="478">KERNEL32.DLL</text><text class="m w" x="540" y="478">2009-3-21 22:06:57</text><text class="m w" x="660" y="478">Symbol</text><text class="m w" x="729" y="478">Yes</text><text class="m w" x="791" y="478">N</text>
<text class="m" x="440" y="495">USER32.DLL</text><text class="m" x="540" y="495">2008-4-14 10:13:17</text><text class="m" x="660" y="495">Symbol</text><text class="m" x="729" y="495">Yes</text><text class="m" x="791" y="495">N</text>
<text class="m" x="440" y="512">WS2_32.DLL</text><text class="m" x="540" y="512">2008-4-14 10:14:32</text><text class="m" x="660" y="512">Symbol</text><text class="m" x="729" y="512">Yes</text><text class="m" x="791" y="512">N</text>
<!-- scrollbar -->
<rect x="404" y="698" width="396" height="16" fill="url(#ht)"/>
<rect x="404" y="698" width="14" height="16" fill="#c9c9c9"/><path class="hi" d="M404.500 713V698.500H418"/><path class="lo" d="M404.500 713.500H418.500V698"/><path d="M414 702v8l-5-4z" fill="#000"/>
<rect x="419" y="698" width="190" height="16" fill="#c9c9c9"/><path class="hi" d="M419.500 713V698.500H609"/><path class="lo" d="M419.500 713.500H609.500V698"/>
<rect x="784" y="698" width="15" height="16" fill="#c9c9c9"/><path class="hi" d="M784.500 713V698.500H799"/><path class="lo" d="M784.500 713.500H799.500V698"/><path d="M789 702v8l5-4z" fill="#000"/>
<path class="lo" d="M403 714.500H800"/>
<!-- message -->
<rect x="403" y="722" width="398" height="48" fill="#fdfcc8"/><path class="lo" d="M403 722.500H801"/>
<text class="m" x="405" y="749" xml:space="preserve" style="fill:#8a3a00">ymbol files found  Using exports from c:\windows\system32\kernel32</text>
<!-- buttons -->
<g>
<path class="hi" d="M805.500 442V416.500H905"/><path class="lo" d="M805.500 442.500H904.500V416"/>
<path class="hi" d="M805.500 480V454.500H905"/><path class="lo" d="M805.500 480.500H904.500V454"/>
<path class="hi" d="M805.500 518V492.500H905"/><path class="lo" d="M805.500 518.500H904.500V492"/>
<path class="hi" d="M805.500 556V530.500H905"/><path class="lo" d="M805.500 556.500H904.500V530"/>
<path class="bl" d="M805.500 569V595.500H904.500V568.500H805"/><path class="hi" d="M806.500 594V569.500H904"/>
<path class="hi" d="M805.500 632V606.500H905"/><path class="lo" d="M805.500 632.500H904.500V606"/>
<path class="hi" d="M805.500 670V644.500H905"/><path class="lo" d="M805.500 670.500H904.500V644"/>
<path class="hi" d="M805.500 708V682.500H905"/><path class="lo" d="M805.500 708.500H904.500V682"/>
</g>
<text class="m" x="818" y="433">Make Default</text>
<text class="mg" x="843" y="471">Load</text><text class="mg" x="837" y="509">Unload</text><text class="mg" x="837" y="547">Reload</text>
<text class="m" x="806" y="585">'ersistent Add..</text>
<text class="mg" x="806" y="623">rsistent Delete.</text>
<text class="mg" x="809" y="661">Symbol Files...</text>
<text class="m" x="809" y="699">Symbol Paths...</text>
<!-- red box + close -->
<rect x="805.500" y="370.500" width="101" height="46.500" fill="#c9c9c9" stroke="#f00000" stroke-width="5"/>
<path class="hi" d="M808 378.500H904"/><path class="lo" d="M808 405.500H904"/>
<text class="m" x="839" y="395">Close</text>
<!-- resize grip -->
<path d="M901 779l13-13M905 779l9-9M909 779l5-5" stroke="#808080" fill="none" style="shape-rendering:auto"/>
<path d="M903 779l11-11M907 779l7-7" stroke="#fff" fill="none" style="shape-rendering:auto"/>
</svg>
</body></html>
